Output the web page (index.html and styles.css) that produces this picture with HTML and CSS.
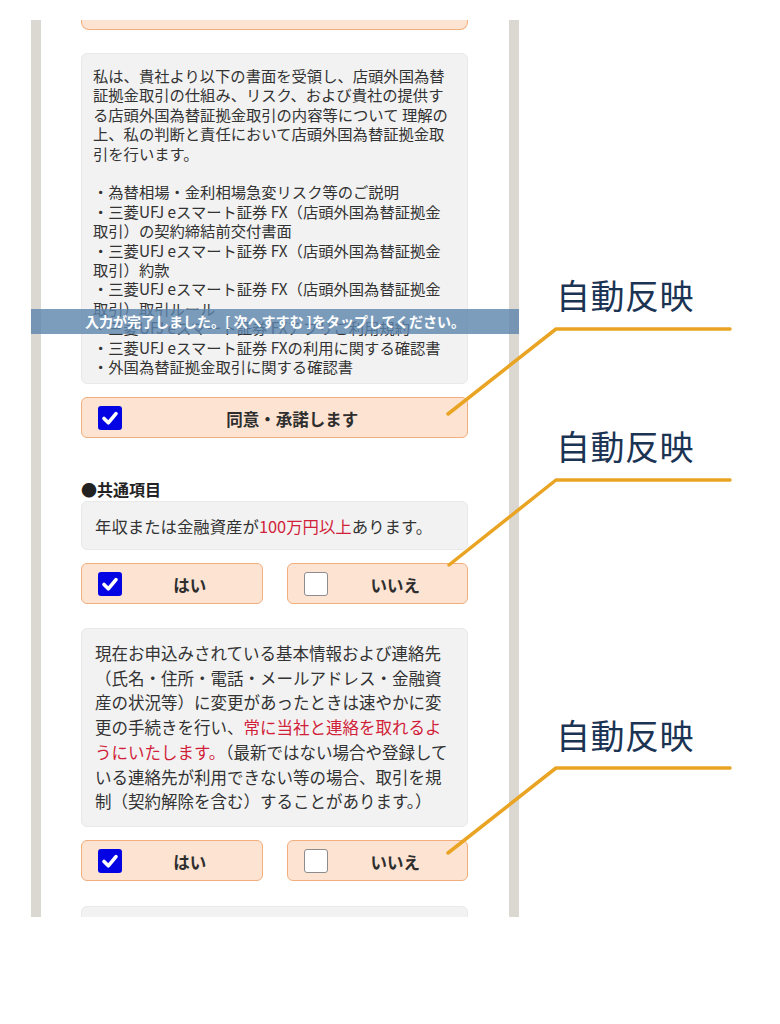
FILE: index.html
```html
<!DOCTYPE html>
<html lang="ja">
<head>
<meta charset="utf-8">
<link rel="stylesheet" href="styles.css">
</head>
<body>
<div class="page">
  <div class="phone">
    <div class="prev-btn"></div>

    <div class="notice notice-docs">
      <p class="nl">私は、貴社より以下の書面を受領し、店頭外国為替<br>証拠金取引の仕組み、リスク、および貴社の提供す<br>る店頭外国為替証拠金取引の内容等について 理解の<br>上、私の判断と責任において店頭外国為替証拠金取<br>引を行います。</p>
      <p class="nl gap">・為替相場・金利相場急変リスク等のご説明<br>・三菱UFJ eスマート証券 FX（店頭外国為替証拠金<br>取引）の契約締結前交付書面<br>・三菱UFJ eスマート証券 FX（店頭外国為替証拠金<br>取引）約款<br>・三菱UFJ eスマート証券 FX（店頭外国為替証拠金<br>取引）取引ルール<br>・三菱UFJ eスマート証券 FXアプリご利用規約<br>・三菱UFJ eスマート証券 FXの利用に関する確認書<br>・外国為替証拠金取引に関する確認書</p>
    </div>

    <div class="choice wide">
      <span class="box checked"><svg viewBox="0 0 24 24" width="24" height="24"><path d="M6 12.5 L10.3 16.8 L18 7.6" fill="none" stroke="#fff" stroke-width="3.6" stroke-linecap="round" stroke-linejoin="round"/></svg></span>
      <span class="label">同意・承諾します</span>
    </div>

    <h3 class="section">●共通項目</h3>

    <div class="notice notice-short">年収または金融資産が<span class="red">100万円以上</span>あります。</div>

    <div class="row">
      <div class="choice">
        <span class="box checked"><svg viewBox="0 0 24 24" width="24" height="24"><path d="M6 12.5 L10.3 16.8 L18 7.6" fill="none" stroke="#fff" stroke-width="3.6" stroke-linecap="round" stroke-linejoin="round"/></svg></span>
        <span class="label">はい</span>
      </div>
      <div class="choice">
        <span class="box"></span>
        <span class="label">いいえ</span>
      </div>
    </div>

    <div class="notice notice-long">現在お申込みされている基本情報および連絡先<br>（氏名・住所・電話・メールアドレス・金融資<br>産の状況等）に変更があったときは速やかに変<br>更の手続きを行い、<span class="red">常に当社と連絡を取れるよ<br>うにいたします。</span>（最新ではない場合や登録して<br>いる連絡先が利用できない等の場合、取引を規<br>制（契約解除を含む）することがあります。）</div>

    <div class="row">
      <div class="choice">
        <span class="box checked"><svg viewBox="0 0 24 24" width="24" height="24"><path d="M6 12.5 L10.3 16.8 L18 7.6" fill="none" stroke="#fff" stroke-width="3.6" stroke-linecap="round" stroke-linejoin="round"/></svg></span>
        <span class="label">はい</span>
      </div>
      <div class="choice">
        <span class="box"></span>
        <span class="label">いいえ</span>
      </div>
    </div>

    <div class="notice notice-next"></div>
  </div>

  <div class="toast">入力が完了しました。[ 次へすすむ ]をタップしてください。</div>

  <svg class="leaders" width="780" height="1024" viewBox="0 0 780 1024">
    <polyline points="448,414 556,329 730,329"/>
    <polyline points="449,565 556,480 730,480"/>
    <polyline points="448,853 556,768 730,768"/>
  </svg>
  <div class="tag tag1">自動反映</div>
  <div class="tag tag2">自動反映</div>
  <div class="tag tag3">自動反映</div>
</div>
</body>
</html>
```

FILE: styles.css
```css
* { box-sizing: border-box; }
html, body { margin: 0; padding: 0; background: #fff; }
body { font-family: "Noto Sans CJK JP", "Noto Sans", sans-serif; color: #333; }

.page { position: relative; width: 780px; height: 1024px; overflow: hidden; }

.phone {
  margin: 20px 0 0 31px;
  width: 488px;
  height: 897px;
  border-left: 10px solid #dbd7d1;
  border-right: 10px solid #dbd7d1;
  background: #fff;
  padding: 0 41px 0 40px;
  overflow: hidden;
}

.prev-btn {
  height: 10px;
  background: #fde3d2;
  border: 1.5px solid #f2ae7c;
  border-top: none;
  border-radius: 0 0 8px 8px;
}

.notice {
  background: #f2f2f2;
  border: 1px solid #e9e9e9;
  border-radius: 6px;
  color: #333;
  white-space: nowrap;
}
.notice-docs {
  margin-top: 23px;
  height: 331px;
  padding: 12px 11px 0 11px;
  font-size: 15.3px;
  line-height: 19.4px;
}
.notice-docs .nl { margin: 0; }
.notice-docs .gap { margin-top: 19.4px; }

.notice-short {
  margin-top: 0;
  height: 49px;
  padding: 0 13px;
  font-size: 16.4px;
  line-height: 49px;
}
.notice-long {
  margin-top: 24px;
  height: 199px;
  padding: 12px 13px;
  font-size: 16.5px;
  line-height: 24.7px;
}
.notice-next { margin-top: 25px; height: 40px; }

.red { color: #d11f3a; }

.choice {
  display: flex;
  align-items: center;
  height: 41px;
  background: #fde3d2;
  border: 1.5px solid #f2ae7c;
  border-radius: 6px;
  padding: 0 4px 0 15.5px;
}
.choice.wide { margin-top: 13px; }
.box {
  flex: none;
  width: 24px;
  height: 24px;
  border-radius: 3px;
  background: #fff;
  border: 1.5px solid #8c8c8c;
  display: block;
}
.box.checked { background: #0303e3; border: none; }
.box svg { display: block; }
.label {
  flex: 1;
  text-align: center;
  font-weight: 700;
  font-size: 16.5px;
  line-height: 22px;
  color: #2e2e2e;
  padding-top: 3px;
}

.section {
  margin: 41px 0 1px 0;
  font-size: 16px;
  line-height: 21px;
  font-weight: 700;
  color: #222;
}

.row {
  display: grid;
  grid-template-columns: 182px 181px;
  justify-content: space-between;
  margin-top: 13px;
}

.toast {
  position: absolute;
  left: 31px;
  top: 309px;
  width: 488px;
  height: 25px;
  background: rgba(92, 132, 172, 0.8);
  color: #fff;
  font-size: 14px;
  font-weight: 700;
  line-height: 25px;
  text-align: center;
}

.leaders { position: absolute; left: 0; top: 0; }
.leaders polyline {
  fill: none;
  stroke: #e9a424;
  stroke-width: 3.5;
  stroke-linecap: round;
  stroke-linejoin: round;
}

.tag {
  position: absolute;
  left: 556px;
  font-size: 34px;
  line-height: 34px;
  color: #1c3454;
  font-weight: 400;
  letter-spacing: 0.5px;
}
.tag1 { top: 278px; }
.tag2 { top: 429px; }
.tag3 { top: 718px; }
```
